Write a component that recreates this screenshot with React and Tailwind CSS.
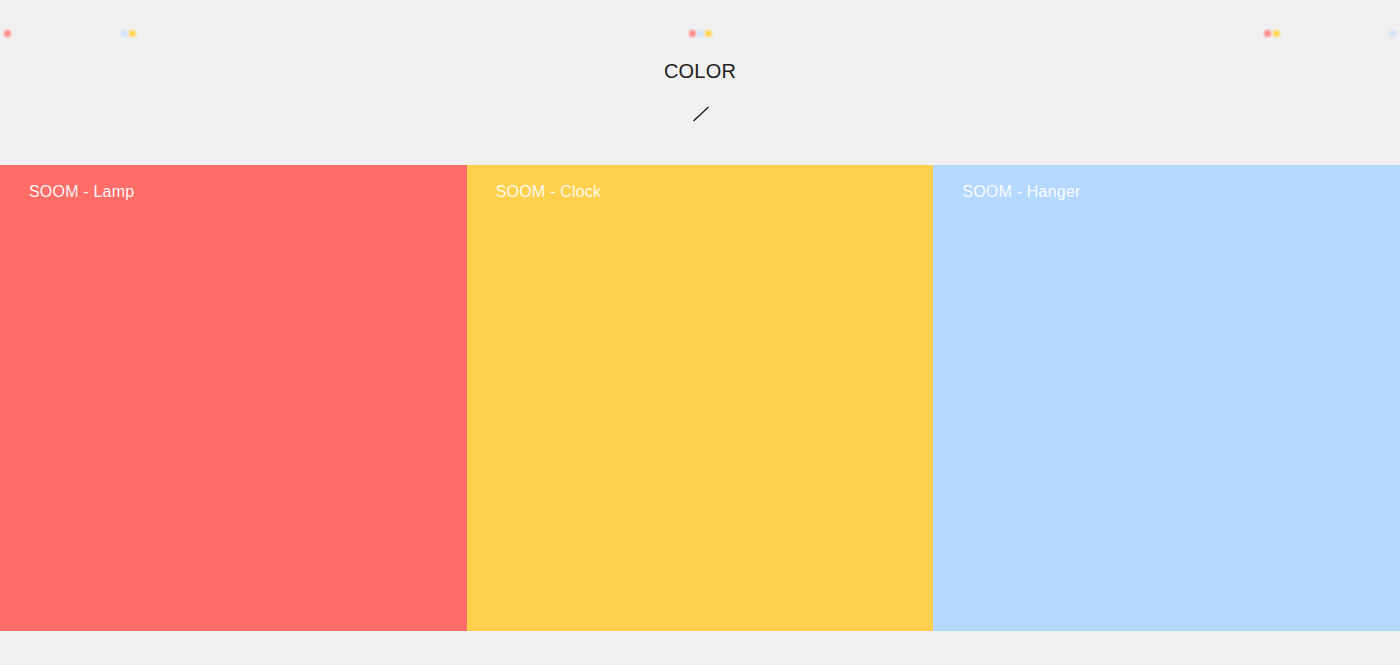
import React from 'react';

const dots = [
  { x: 7, c: 'bg-[#ff8a86]' },
  { x: 124, c: 'bg-[#cfe3fb]' },
  { x: 132, c: 'bg-[#ffd24f]' },
  { x: 692, c: 'bg-[#ff8a86]' },
  { x: 700, c: 'bg-[#cfe3fb]' },
  { x: 708, c: 'bg-[#ffd24f]' },
  { x: 1267, c: 'bg-[#ff8a86]' },
  { x: 1276, c: 'bg-[#ffd24f]' },
  { x: 1392, c: 'bg-[#cfe3fb]' },
];

const panels = [
  { name: 'SOOM - Lamp', bg: 'bg-[#ff6d68]' },
  { name: 'SOOM - Clock', bg: 'bg-[#ffcf4e]' },
  { name: 'SOOM - Hanger', bg: 'bg-[#b5d8ff]' },
];

export default function App() {
  return (
    <div className="w-[1400px] h-[665px] bg-[#f0f0f0] overflow-hidden" style={{ fontFamily: '"Liberation Sans", Arial, sans-serif' }}>
      {/* header */}
      <div className="relative h-[165px]">
        {dots.map((d, i) => (
          <span
            key={i}
            className={`absolute top-[30px] w-[7px] h-[7px] rounded-full blur-[1px] ${d.c}`}
            style={{ left: d.x - 3.5 }}
          />
        ))}
        <div className="flex flex-col items-center pt-[59px]">
          <h1 className="text-[20px] leading-[24px] text-[#222] font-normal tracking-[0.2px]">COLOR</h1>
          <svg width="16" height="16" viewBox="0 0 16 16" className="mt-[23px] ml-[1px]">
            <line x1="0.5" y1="15" x2="15.5" y2="1" stroke="#111" strokeWidth="1.2" />
          </svg>
        </div>
      </div>

      {/* panels */}
      <div className="grid grid-cols-3 h-[466px]">
        {panels.map((p) => (
          <div key={p.name} className={`${p.bg} pl-[29px] pt-[15px]`}>
            <span className="text-[16px] leading-[18px] text-white/95 tracking-[0.2px]">{p.name}</span>
          </div>
        ))}
      </div>
    </div>
  );
}
